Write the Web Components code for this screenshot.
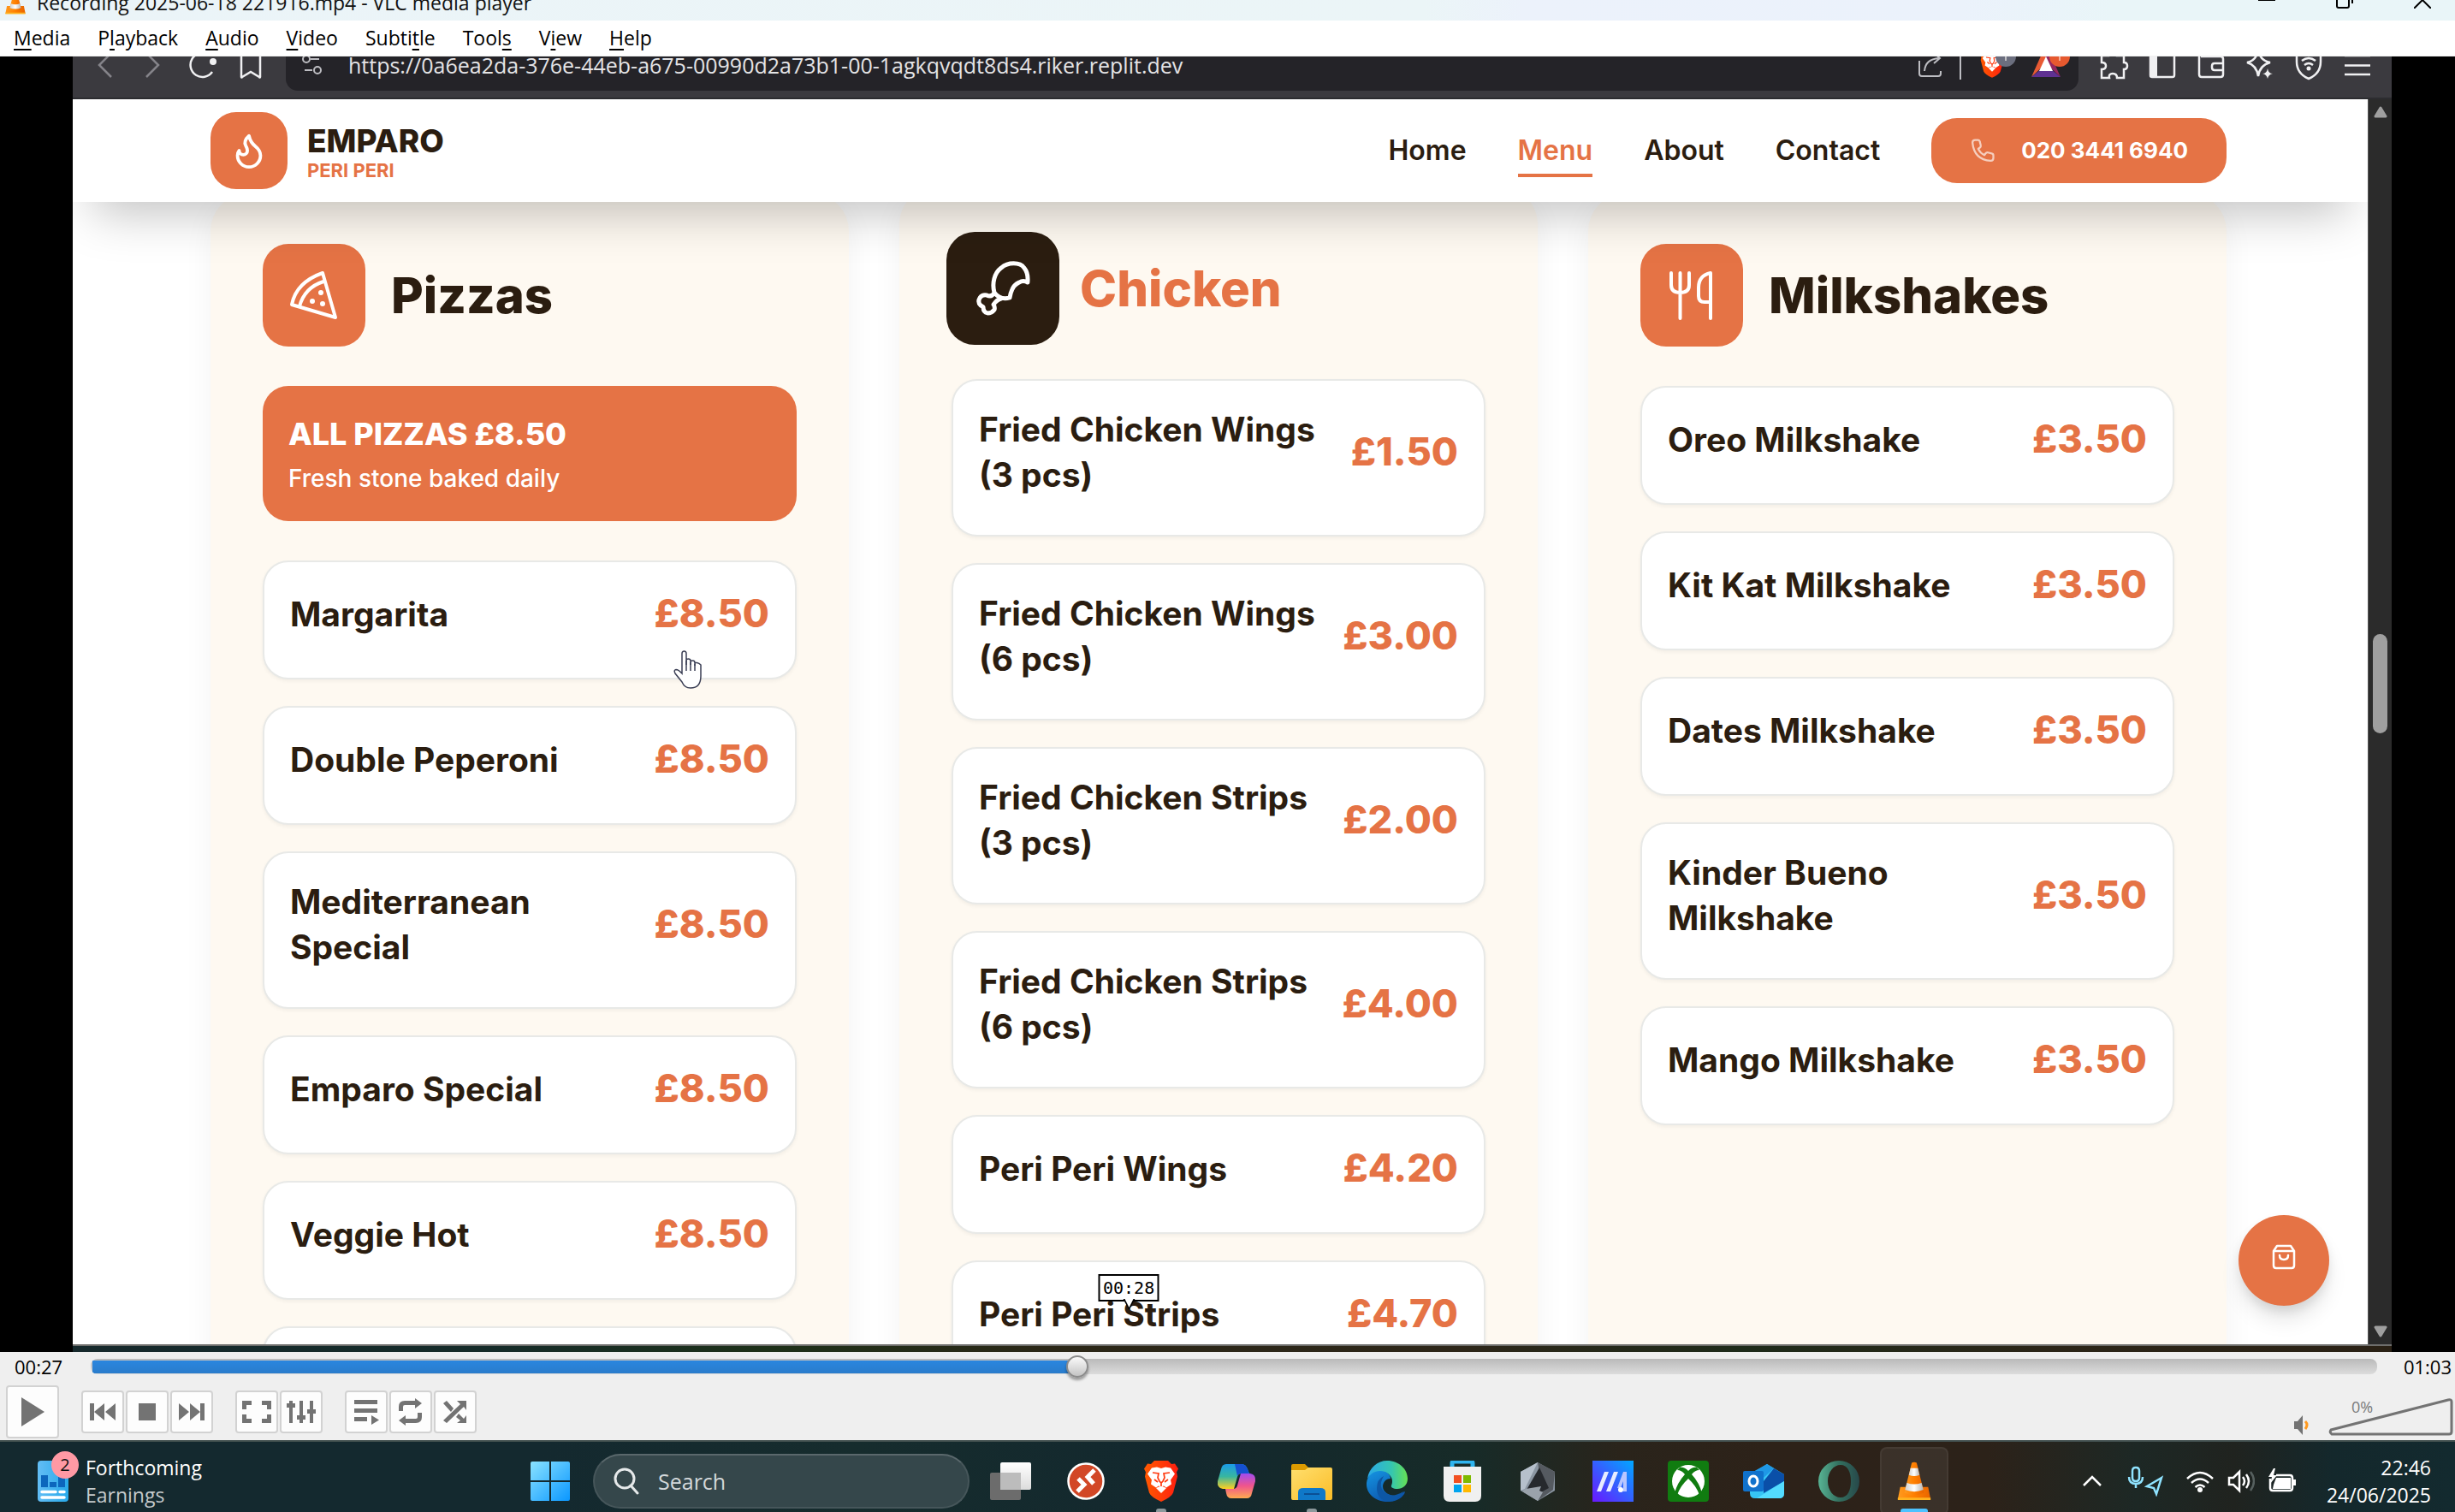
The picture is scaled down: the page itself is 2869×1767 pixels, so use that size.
<!DOCTYPE html>
<html lang="en">
<head>
<meta charset="utf-8">
<title>Recording 2025-06-18 221916.mp4 - VLC media player</title>
<style>
html,body{height:100%;margin:0}
body{background:#000;overflow:hidden;--ui:"Open Sans","Noto Sans",sans-serif;--site:Inter,"Open Sans",sans-serif;--orange:#e57345;--ink:#2b1d10;font-family:var(--ui)}
</style>
</head>
<body>
<vlc-window>
  <vlc-titlebar slot="title">Recording 2025-06-18 221916.mp4 - VLC media player</vlc-titlebar>
  <vlc-menubar slot="menu"></vlc-menubar>
  <browser-frame slot="video">
    <browser-toolbar slot="toolbar"></browser-toolbar>
    <restaurant-page>
      <site-header slot="header"></site-header>
      <menu-column icon="pizza" heading="Pizzas">
        <promo-banner slot="promo" heading="ALL PIZZAS £8.50">Fresh stone baked daily</promo-banner>
        <menu-item price="£8.50">Margarita</menu-item>
        <menu-item price="£8.50">Double Peperoni</menu-item>
        <menu-item price="£8.50">Mediterranean Special</menu-item>
        <menu-item price="£8.50">Emparo Special</menu-item>
        <menu-item price="£8.50">Veggie Hot</menu-item>
        <menu-item></menu-item>
      </menu-column>
      <menu-column icon="chicken" heading="Chicken" hovered>
        <menu-item price="£1.50">Fried Chicken Wings (3 pcs)</menu-item>
        <menu-item price="£3.00">Fried Chicken Wings (6 pcs)</menu-item>
        <menu-item price="£2.00">Fried Chicken Strips (3 pcs)</menu-item>
        <menu-item price="£4.00">Fried Chicken Strips (6 pcs)</menu-item>
        <menu-item price="£4.20">Peri Peri Wings</menu-item>
        <menu-item price="£4.70">Peri Peri Strips</menu-item>
      </menu-column>
      <menu-column icon="cutlery" heading="Milkshakes">
        <menu-item price="£3.50">Oreo Milkshake</menu-item>
        <menu-item price="£3.50">Kit Kat Milkshake</menu-item>
        <menu-item price="£3.50">Dates Milkshake</menu-item>
        <menu-item price="£3.50">Kinder Bueno Milkshake</menu-item>
        <menu-item price="£3.50">Mango Milkshake</menu-item>
      </menu-column>
      <basket-button slot="fab"></basket-button>
      <hand-cursor slot="cursor"></hand-cursor>
    </restaurant-page>
    <scroll-track slot="scroll"></scroll-track>
  </browser-frame>
  <vlc-controls slot="controls"></vlc-controls>
  <win-taskbar slot="taskbar"></win-taskbar>
</vlc-window>

<script>
const reset = `:host,*{box-sizing:border-box}button,input{font:inherit;color:inherit;border:0;background:none;padding:0;margin:0}a{color:inherit;text-decoration:none}svg{display:block;flex:none}`;
function define(name, render) {
  customElements.define(name, class extends HTMLElement {
    constructor() { super(); this.attachShadow({mode:'open'}); }
    connectedCallback() { this.shadowRoot.innerHTML = render(this).replace('<style>', '<style>' + reset); }
  });
}

const cone = size => `<svg width="${size}" height="${size}" viewBox="0 0 48 48" aria-hidden="true">
  <defs><linearGradient id="co" x1="0" x2="1"><stop offset="0" stop-color="#ff9a1f"/><stop offset=".5" stop-color="#ff7f00"/><stop offset="1" stop-color="#e86400"/></linearGradient>
  <linearGradient id="cw" x1="0" x2="1"><stop offset="0" stop-color="#cfcfcf"/><stop offset=".5" stop-color="#fff"/><stop offset="1" stop-color="#b5b5b5"/></linearGradient></defs>
  <path d="M7 31h34l3 15H4z" fill="url(#co)"/><path d="M4 44h40v3H4z" fill="#ffb320"/>
  <path d="M21 1.500q3-1.500 6 0L36 38q-12 6-24 0z" fill="url(#co)"/>
  <path d="M19.500 8h9l2 8.500q-6.500 2.500-13 0z" fill="url(#cw)"/><path d="M15 26q9 3.500 18 0l2.200 8.500q-11 4.500-22.400 0z" fill="url(#cw)"/></svg>`;

const lion = (w,h) => `<svg width="${w}" height="${h}" viewBox="0 0 40 48" aria-hidden="true">
  <defs><linearGradient id="br" x1="0" x2="1"><stop offset="0" stop-color="#ff5a00"/><stop offset="1" stop-color="#ff1e10"/></linearGradient></defs>
  <path d="M12 0h16l4 4 4-.5 4 6-2 4 1 5-5 19q-2 5-14 10.500Q8 42.500 6 37.500L1 18.500l1-5-2-4 4-6 4 .5z" fill="url(#br)"/>
  <path d="M20 9l5-1.500 6 1 5 7-5 7 1 5-6 4-3-2-3 1-3-1-3 2-6-4 1-5-5-7 5-7 6-1z" fill="#fff"/><path d="M14 32l6-2.500 6 2.500-6 6z" fill="#fff"/>
  <path d="M10 14l7 1-1 5 2 4 2 2 2-2 2-4-1-5 7-1M12 22l4 3M28 22l-4 3M20 26v4" fill="none" stroke="#ff3a10" stroke-width="1.700"/></svg>`;

define('vlc-window', () => `<style>
:host{display:flex;flex-direction:column;height:100vh}
.v{flex:1;min-height:0;display:flex;background:#000;padding:0 74px 0 85px}
::slotted([slot=video]){flex:1}
</style><slot name="title"></slot><slot name="menu"></slot><main class="v"><slot name="video"></slot></main><slot name="controls"></slot><slot name="taskbar"></slot>`);

define('vlc-titlebar', () => `<style>
:host{display:block;height:24px;overflow:hidden;background:linear-gradient(90deg,#ebf4f8 0,#ebf5f7 58%,#ecf2fb 62%,#ebf2fb 80%,#e9f5f8 86%,#e9f5f8 100%)}
.r{height:48px;margin-top:-24px;display:flex;align-items:center;justify-content:space-between;padding:0 28px 0 4px}
.t{display:flex;align-items:center;gap:11px;padding-top:6px;font-size:23px;line-height:30px;color:#111}
.c{display:flex;gap:71px}
button{width:20px;height:20px}
</style><header class="r"><div class="t">${cone(28)}<span><slot></slot></span></div>
<div class="c"><button aria-label="Minimise"><svg width="20" height="20"><path d="M0 10h20" stroke="#000" stroke-width="2"/></svg></button>
<button aria-label="Restore"><svg width="20" height="20" fill="none" stroke="#000" stroke-width="2" overflow="visible"><rect x="1" y="5" width="14" height="14" rx="2"/><path d="M5 1h10q4 0 4 4v9"/></svg></button>
<button aria-label="Close"><svg width="20" height="20"><path d="M0 0l20 20M20 0L0 20" stroke="#000" stroke-width="2"/></svg></button></div></header>`);

define('vlc-menubar', () => `<style>
:host{display:block;background:#fff;border-bottom:1px solid #f0f0f0}
nav{height:41px;padding:0 16px;display:flex;align-items:center;gap:32px}
button{font-size:23px;line-height:30px;color:#000;padding-bottom:2px}
u{text-underline-offset:4px;text-decoration-thickness:2px;text-decoration-skip-ink:none}
</style><nav><button><u>M</u>edia</button><button>P<u>l</u>ayback</button><button><u>A</u>udio</button><button><u>V</u>ideo</button><button>Subti<u>t</u>le</button><button>Tool<u>s</u></button><button>V<u>i</u>ew</button><button><u>H</u>elp</button></nav>`);

define('browser-frame', () => `<style>
:host{display:flex;flex-direction:column;min-width:0}
.p{flex:1;min-height:0;display:flex}
::slotted(restaurant-page){flex:1;min-width:0}
.s{height:9px;border-top:2px solid #6e6e6c;background:linear-gradient(90deg,#16292c 0,#152b29 18%,#1d3018 30%,#2b2717 42%,#2d2619 60%,#1e2b1a 72%,#2b2517 85%,#2a2115 100%)}
</style><slot name="toolbar"></slot><div class="p"><slot></slot><slot name="scroll"></slot></div><div class="s"></div>`);

define('browser-toolbar', () => `<style>
:host{display:block;height:50px;overflow:hidden;background:#3b3a3f;border-bottom:2px solid #2c2c30}
.r{height:76px;margin-top:-28px;display:flex;align-items:center;padding:0 24px;gap:25px}
.n{display:flex;gap:24px}
.b{flex:1;display:flex;align-items:center;height:60px;border-radius:14px;background:#242328;padding:0 19px;color:#e4e4e6}
input{flex:1;min-width:0;margin-left:30px;font-size:25px;height:40px;outline:0}
.i{display:flex;gap:25px;align-items:center}
.e{display:flex;gap:20px;align-items:center}
svg{fill:none;stroke:#f0f0f2;stroke-width:2.500;overflow:visible}
.d{stroke:#85848a}.w{stroke:#bdbdc2;stroke-width:2}
svg svg{stroke:none}
</style><div class="r"><div class="n">
<button aria-label="Back"><svg class="d" width="32" height="32"><path d="M21 2L7 16l14 14"/></svg></button>
<button aria-label="Forward"><svg class="d" width="32" height="32"><path d="M6 2l14 14L6 30"/></svg></button>
<button aria-label="Reload"><svg width="32" height="32"><path d="M27 24A14 14 0 1 1 22 3.500"/><circle cx="28" cy="12" r="4" fill="#f0f0f2" stroke="none"/></svg></button>
<button aria-label="Bookmark"><svg width="32" height="32"><path d="M5 0v30q0 1 1 0l10-6 10 6q1 1 1 0V0z"/></svg></button></div>
<div class="b"><svg class="w" width="24" height="24"><circle cx="5" cy="5" r="4"/><path d="M10 5h10M3 18h9"/><circle cx="18" cy="18" r="4"/></svg>
<input type="text" aria-label="Address" value="https://0a6ea2da-376e-44eb-a675-00990d2a73b1-00-1agkqvqdt8ds4.riker.replit.dev">
<div class="e"><button aria-label="Share"><svg class="w" width="28" height="28"><path d="M1 9v15q0 3 3 3h19q3 0 3-3v-3M7 21Q8 7 24 6M18 0l7 6-7 6"/></svg></button>
<svg class="w" width="2" height="34"><path d="M1 0v34"/></svg>
<button aria-label="Shields"><svg width="42" height="36" viewBox="0 0 42 36"><g transform="translate(2 -2)">${lion(28,36)}</g><circle cx="32" cy="8" r="12" fill="#6b6e7e" stroke="none"/><path d="M32 0v13" stroke="#ddd" stroke-width="1.500"/></svg></button>
<button aria-label="Rewards"><svg width="36" height="32" viewBox="0 0 36 32"><path d="M17-8L0 30l17-16z" fill="#e85a34" stroke="none"/><path d="M17-8l17 38-17-16z" fill="#96275f" stroke="none"/><path d="M0 30L17 16l17 14z" fill="#5f3192" stroke="none"/><path d="M17 6l8 17H9z" fill="#fff" stroke="none"/><circle cx="33" cy="6" r="12" fill="#e6592f" stroke="none"/><path d="M33-2v13" stroke="#f7c9b8" stroke-width="1.500"/></svg></button></div></div>
<div class="i"><button aria-label="Extensions"><svg width="32" height="32"><path d="M2 5h8q0-5 5-5t5 5h8v8q4 0 4 4t-4 4v10h-8q0-5-5-5t-4 5H2V21q5 0 5-4t-5-4z"/></svg></button>
<button aria-label="Sidebar"><svg width="32" height="32"><rect x="2" y="1" width="28" height="29" rx="2"/><path d="M1 1h9v29H1z" fill="#f0f0f2" stroke="none"/></svg></button>
<button aria-label="Wallet"><svg width="32" height="32"><path d="M28 6V3q0-2-2-2H5Q2 1 2 4v23q0 3 3 3h22q3 0 3-3V9q0-3-3-3H4"/><path d="M30 14H20q-3 0-3 3v2q0 3 3 3h10"/></svg></button>
<button aria-label="Leo"><svg width="32" height="32"><path d="M14-2q2 13 14 15-12 3-14 16Q12 16 1 13 12 11 14-2z"/><path d="M25 20q1 6 6 6-5 1-6 6-1-5-6-6 5 0 6-6z" fill="#f0f0f2" stroke="none"/></svg></button>
<button aria-label="VPN"><svg width="32" height="32"><path d="M16-2Q8 2 2 2v10q0 14 14 20 14-6 14-20V2Q24 2 16-2z"/><path d="M8 11q8-6 16 0M11 16q5-4 10 0"/><circle cx="16" cy="20" r="2.500" fill="#f0f0f2" stroke="none"/></svg></button>
<button aria-label="Menu"><svg width="32" height="32" stroke-width="3"><path d="M1 5h30M1 16.500h30M1 27h30"/></svg></button></div></div>`);

define('restaurant-page', () => `<style>
:host{display:flex;flex-direction:column;position:relative;overflow:hidden;background:#fff;font-family:var(--site)}
.g{display:grid;grid-template-columns:repeat(3,1fr);gap:59px;padding:0 165px 0 161px;margin-top:-10px}
</style><slot name="header"></slot><section class="g"><slot></slot></section><slot name="fab"></slot><slot name="cursor"></slot>`);

define('site-header', () => `<style>
:host{display:block;position:relative;z-index:2;background:#fff;box-shadow:0 36px 56px -24px rgba(0,0,0,.25);flex:none}
header{height:120px;padding:0 165px 0 161px;display:flex;align-items:center;justify-content:space-between}
.b{display:flex;align-items:center;gap:23px}
.l{width:90px;height:90px;border-radius:30px;background:var(--orange);display:grid;place-items:center}
.x{padding-top:4px}
.n{font-size:37px;line-height:42px;font-weight:800;color:var(--ink)}
.s{font-size:22px;line-height:26px;font-weight:700;color:var(--orange)}
nav{display:flex;align-items:center;gap:60px;font-size:32px;font-weight:600;color:var(--ink)}
nav a{border-bottom:4px solid transparent;border-top:4px solid transparent;line-height:54px}
nav a.on{color:var(--orange);border-bottom-color:var(--orange)}
nav a.p{display:flex;align-items:center;gap:30px;height:76px;padding:0 45px;border:0;border-radius:30px;background:var(--orange);color:#fff;font-size:26px;font-weight:700}
.p svg{opacity:.65}
</style><header><a class="b" href="#"><span class="l"><svg width="46" height="46" viewBox="0 0 24 24" fill="none" stroke="#fff" stroke-width="2" stroke-linejoin="round"><path d="M8.500 14.500A2.500 2.500 0 0 0 11 12c0-1.380-.5-2-1-3-1.072-2.143-.224-4.054 2-6 .5 2.500 2 4.900 4 6.500 2 1.600 3 3.500 3 5.500a7 7 0 1 1-14 0c0-1.153.433-2.294 1-3a2.500 2.500 0 0 0 2.500 2.500z"/></svg></span><span class="x"><div class="n">EMPARO</div><div class="s">PERI PERI</div></span></a>
<nav><a href="#">Home</a><a class="on" href="#">Menu</a><a href="#">About</a><a href="#">Contact</a><a class="p" href="#"><svg width="30" height="30" viewBox="0 0 24 24" fill="none" stroke="#fff" stroke-width="1.800" stroke-linejoin="round"><path d="M2.500 4.500Q2.500 2 5 2h2.500q1.500 0 1.800 1.500l.9 3.500q.3 1.400-.8 2.200l-1.600 1.200q2 4 5.800 5.800l1.200-1.600q.8-1.100 2.200-.8l3.500.9q1.500.3 1.500 1.800V19q0 2.500-2.500 2.500Q4 20.500 2.500 4.500z"/></svg>020 3441 6940</a></nav></header>`);

const glyphs = {
  pizza:`<svg width="58" height="58" viewBox="0 0 58 58" fill="none" stroke="#fff" stroke-width="4" stroke-linejoin="round" stroke-linecap="round"><path d="M39 3L54 55 3 40Q8 14 39 3zM40 13Q18 20 12 42"/><g fill="#fff" stroke="none"><circle cx="37" cy="26" r="3"/><circle cx="27" cy="36" r="3"/><circle cx="39" cy="39" r="3"/></g></svg>`,
  chicken:`<svg width="58" height="58" viewBox="0 0 64 64" fill="none" stroke="#fff" stroke-width="5" stroke-linejoin="round" stroke-linecap="round"><path d="M22 37C19 26 22 14 30 8 38 1 52 1 57 8q5 6 4 17-5-3-10 0-6 3-8 8-2 4-3 10-11 3-18-6zM22 37q-3 6-9 3-5-1-8 3-3 5 1 9l3 2q0 6 5 7 5 0 8-4 1-3-1-6 4-6 9-7"/></svg>`,
  cutlery:`<svg width="58" height="58" viewBox="0 0 58 58" fill="none" stroke="#fff" stroke-width="4" stroke-linejoin="round" stroke-linecap="round"><path d="M5 3v14q0 9 10.500 9T26 17V3M15.500 3v53M51 3v53M51 3Q37 6 37 20v10q0 7 7 7h7"/></svg>`
};

define('menu-column', el => `<style>
:host{display:block;min-width:0;background:#fef9f1;border-radius:44px;padding:59px 61px;box-shadow:0 10px 36px rgba(0,0,0,.05)}
:host([hovered]){margin-top:-8px}
.h{display:flex;align-items:center;gap:30px;margin-bottom:46px}
.q{width:120px;height:120px;border-radius:30px;background:var(--orange);display:grid;place-items:center;flex:none}
h2{margin:0;font-size:58px;line-height:72px;font-weight:800;color:var(--ink)}
:host([hovered]) .q{background:var(--ink);transform:scale(1.1)}
:host([hovered]) h2{color:var(--orange)}
.l{display:flex;flex-direction:column;gap:31px}
</style><div class="h"><span class="q">${glyphs[el.getAttribute('icon')]}</span><h2>${el.getAttribute('heading')}</h2></div><slot name="promo"></slot><div class="l"><slot></slot></div>`);

define('promo-banner', el => `<style>
:host{display:block;margin-bottom:46px;padding:31px 30px;border-radius:30px;background:var(--orange);color:#fff}
h3{margin:0 0 7px;font-size:36px;line-height:51px;font-weight:800}
p{margin:0;font-size:28px;line-height:38px;font-weight:500}
</style><h3>${el.getAttribute('heading')}</h3><p><slot></slot></p>`);

define('menu-item', el => `<style>
:host{display:flex;align-items:center;justify-content:space-between;gap:16px;min-height:139px;padding:30px;background:#fff;border:2px solid #e8e9e7;border-radius:30px;box-shadow:0 2px 4px rgba(0,0,0,.05)}
h3{margin:0 0 14px;font-size:39px;line-height:53px;font-weight:700;color:var(--ink)}
p{margin:0 0 15px;font-size:45px;line-height:60px;font-weight:800;color:var(--orange)}
</style><h3><slot></slot></h3><p>${el.getAttribute('price') || ''}</p>`);

define('basket-button', () => `<style>
:host{position:absolute;right:45px;bottom:45px;z-index:2}
button{width:106px;height:106px;border-radius:50%;background:var(--orange);display:grid;place-items:center;padding-bottom:8px;box-shadow:0 18px 28px -6px rgba(0,0,0,.14),0 6px 12px rgba(0,0,0,.08)}
</style><button aria-label="Basket"><svg width="28" height="30" fill="none" stroke="#fff" stroke-width="2.500" stroke-linejoin="round" stroke-linecap="round"><path d="M2 8l4-6h16l4 6v17q0 3-3 3H5q-3 0-3-3zM2 8h24M9 13q0 5 5 5t5-5"/></svg></button>`);

define('hand-cursor', () => `<style>:host{position:absolute;left:702px;top:644px;z-index:3}</style>
<svg width="34" height="46" viewBox="0 0 34 46"><path d="M10 27V4q0-3 2.500-3T15 4v13-5q0-2 2.500-2t2.500 2.500V17v-3q0-2 2.500-2t2.500 2.500V18v-2q0-2 2.500-1.500T32 17v13q0 14-12 14-7 0-10-7L2 27q-2-4 1-4.500 3 0 7 4.500z" fill="#fff" stroke="#3b3f55" stroke-width="1.500"/><path d="M15 12v12M20 14v10M25 16v8" stroke="#3b3f55" stroke-width="1.500"/></svg>`);

define('scroll-track', () => `<style>
:host{display:flex;flex-direction:column;align-items:center;width:28px;padding:8px 0;background:#2b2b2b;border-left:1px solid #555}
.t{flex:1;display:flex;flex-direction:column;align-items:center}
.t::before{content:"";flex:603}.t::after{content:"";flex:693}
i{width:17px;height:116px;border-radius:9px;background:#9f9f9f}
</style><svg width="18" height="14"><path d="M9 2l6 10H3z" fill="#9f9f9f" stroke="#9f9f9f" stroke-width="3" stroke-linejoin="round"/></svg><div class="t"><i></i></div><svg width="18" height="14"><path d="M9 12l6-10H3z" fill="#9f9f9f" stroke="#9f9f9f" stroke-width="3" stroke-linejoin="round"/></svg>`);

define('vlc-controls', () => `<style>
:host{display:block;background:#efefef;height:103px;color:#000;position:relative}
.p{height:34px;display:flex;align-items:center;padding:0 4px 0 17px;font-size:22px}
time{line-height:30px}
.w{flex:1;margin:0 31px 0 33px;position:relative;display:flex;height:34px;align-items:center}
.w input{appearance:none;-webkit-appearance:none;width:100%;height:18px;border-radius:8px;background:linear-gradient(#2a86df,#2a7ccb) 2px 2px/43% 15px no-repeat,linear-gradient(#bababa,#dcdcdc)}
.w input::-webkit-slider-thumb{-webkit-appearance:none;width:26px;height:26px;border-radius:50%;border:2px solid #8b8b8b;background:linear-gradient(#fafafa,#c4c4c4);box-shadow:0 3px 3px rgba(0,0,0,.35)}
.tip{position:absolute;left:45.400%;bottom:93px;transform:translateX(-50%);height:32px;width:71px;border:2px solid #000;background:#fff;font:20px/28px "DejaVu Sans Mono",monospace;text-align:center;z-index:4}
.tip svg{position:absolute;left:27px;top:27px}
.b{height:69px;display:flex;align-items:center;padding:3px 2px 0 7px;gap:26px}
.g{display:flex;gap:2px}
.g button{width:50px;height:50px;border:2px solid #d2d2d2;border-radius:4px;background:#fdfdfd;display:grid;place-items:center}
.g button.play{width:62px;height:62px}
.g svg{fill:#737373}
.v{margin-left:auto;display:flex;align-items:flex-end;gap:22px;height:56px}
.s{position:relative;width:146px;height:46px}
.s label{position:absolute;left:27px;top:0;font-size:18px;line-height:24px;color:#7a7a7a}
.s input{position:absolute;inset:0;opacity:0;width:100%}
</style><div class="p"><time>00:27</time><div class="w"><input type="range" aria-label="Position" min="0" max="100" step="0.100" value="43.100"><output class="tip">00:28<svg width="14" height="13"><path d="M0 0h14L7 13z" fill="#000"/><path d="M2 0h10L7 10z" fill="#fff"/></svg></output></div><time>01:03</time></div>
<div class="b"><div class="g"><button class="play" aria-label="Play"><svg width="36" height="36"><path d="M5 1l27 17L5 35z"/></svg></button></div>
<div class="g"><button aria-label="Previous"><svg width="32" height="22"><path d="M1 1h5v20H1zM18 1v20L6 11zM31 1v20L19 11z"/></svg></button><button aria-label="Stop"><svg width="20" height="20"><path d="M0 0h20v20H0z"/></svg></button><button aria-label="Next"><svg width="32" height="22"><path d="M26 1h5v20h-5zM14 1v20l12-10zM1 1v20l12-10z"/></svg></button></div>
<div class="g"><button aria-label="Fullscreen"><svg width="34" height="28"><path d="M0 1h11v5H5v5H0zM34 1H23v5h6v5h5zM0 27h11v-5H5v-5H0zM34 27H23v-5h6v-5h5z"/></svg></button><button aria-label="Extended settings"><svg width="34" height="28"><path d="M3 1h4v26H3zM0 4h10v5H0zM15 1h4v26h-4zM12 18h10v5H12zM27 1h4v26h-4zM24 11h10v5H24z"/></svg></button></div>
<div class="g"><button aria-label="Playlist"><svg width="30" height="30"><path d="M1 1h27v5H1zM1 11h27v5H1zM1 21h15v5H1zM21 19v11l9-5.500z"/></svg></button><button aria-label="Loop"><svg width="30" height="32"><path d="M1 15V10Q1 3 8 3h12V0l8 6-8 6V8H8Q6 8 6 10v5zM28 17v5q0 7-7 7H9v3l-8-6 8-6v4h12q2 0 2-2v-5z"/></svg></button><button aria-label="Random"><svg width="30" height="28"><path d="M1 4l4-3 8 9-3 4zM1 24L21 5l-4-4h11v11l-3-4L5 27zM19 16l6 6 3-4v9H17l4-3-5-4z"/></svg></button></div>
<div class="v"><svg width="18" height="24"><path d="M0 7h4l6-7v23l-6-7H0z" fill="#737373"/><path d="M13 7q4 4 0 9" fill="none" stroke="#ff9a1f" stroke-width="3"/></svg>
<div class="s"><label for="vol">0%</label><svg width="146" height="46"><path d="M3 39L140 4q4-1 4 2v35q0 3-3 3H4q-3-2-1-5z" fill="none" stroke="#737373" stroke-width="3"/></svg><input id="vol" type="range" min="0" max="125" value="0"></div></div></div>`);

const apps = {
'Task View':`<svg width="48" height="48" viewBox="0 0 48 48"><defs><linearGradient id="a" y2="1" x2="0"><stop stop-color="#fff"/><stop offset="1" stop-color="#dcdcdc"/></linearGradient></defs><rect x="12" y="2" width="36" height="32" rx="2" fill="url(#a)"/><rect x="0" y="14" width="36" height="32" rx="2" fill="#6c6c6c"/><path d="M12 14h24v20H12z" fill="#bcbcbc"/></svg>`,
'Remote Desktop':`<svg width="48" height="48"><circle cx="24" cy="24" r="20.500" fill="#d24726" stroke="#fff" stroke-width="2.500"/><path d="M34 11l-8 8 7 8M15 21l7 7-8 8" fill="none" stroke="#fff" stroke-width="5"/></svg>`,
'Brave':lion(42,48),
'Copilot':`<svg width="48" height="48" viewBox="0 0 48 48"><defs><linearGradient id="c1" x2="0" y2="1"><stop stop-color="#1b9be8"/><stop offset=".5" stop-color="#37b6a0"/><stop offset="1" stop-color="#ffd020"/></linearGradient><linearGradient id="c2" x2="0" y2="1"><stop stop-color="#a04cf0"/><stop offset=".5" stop-color="#f0558c"/><stop offset="1" stop-color="#ffab50"/></linearGradient></defs><path d="M12 4h18q5 0 7 6l2 5h-9q-4 0-5 4l-4 14H8q-7-1-6-9L6 10q1-6 6-6z" fill="url(#c1)"/><path d="M22 4h8q5 0 7 6l2 5h-9q-4 0-5 3z" fill="#1550d0"/><path d="M36 44H18q-5 0-6-6l-1-5h9q4 0 5-4l4-14h11q7 1 6 9l-4 14q-1 6-6 6z" fill="url(#c2)"/></svg>`,
'File Explorer':`<svg width="48" height="48" viewBox="0 0 48 48"><defs><linearGradient id="f" x2="1" y2="1"><stop stop-color="#ffdf6e"/><stop offset="1" stop-color="#fbbd28"/></linearGradient></defs><path d="M0 6q0-2 2-2h14l4 4v8H0z" fill="#dd9b00"/><path d="M0 11h16l4-3h26q2 0 2 2v34q0 2-2 2H2q-2 0-2-2z" fill="url(#f)"/><path d="M8 46V37q0-5 6-5h20q6 0 6 5v9z" fill="#0f78c8"/><path d="M15 39h18" stroke="#0b4f94" stroke-width="2"/></svg>`,
'Edge':`<svg width="48" height="48" viewBox="0 0 48 48"><defs><linearGradient id="e1" x2="1"><stop stop-color="#2aa8e8"/><stop offset=".6" stop-color="#35c6b0"/><stop offset="1" stop-color="#66e052"/></linearGradient><linearGradient id="e2" x2=".6" y2="1"><stop stop-color="#1595e2"/><stop offset="1" stop-color="#0c54ab"/></linearGradient></defs><path d="M1 21C3 8 13 0 24 0c14 0 24 10 24 21 0 8-6 12-12 12-5 0-8-2-7-4 4-8-3-16-11-16Q7 12 1 21z" fill="url(#e1)"/><path d="M0 26C1 17 8 12 16 12c7 0 12 4 12 9-6 0-9 5-9 9 0 7 8 11 14 11 6 0 10-4 11-5 1 0 1 1 0 3-4 6-11 9-19 9C11 48-1 39 0 26z" fill="url(#e2)"/><path d="M12 32q0-10 8-14-8 14 4 21 8 4 19-3-6 12-17 12-14-2-14-16z" fill="#0d57a5"/></svg>`,
'Microsoft Store':`<svg width="48" height="48" viewBox="0 0 48 48"><path d="M12 11V3q0-2 2-2h20q2 0 2 2v8" fill="none" stroke="#2fb4ee" stroke-width="5"/><path d="M2 7h44v34q0 7-7 7H9q-7 0-7-7z" fill="#f0f0f0"/><path d="M14 17h9v9h-9z" fill="#f25022"/><path d="M25 17h9v9h-9z" fill="#7fba00"/><path d="M14 28h9v9h-9z" fill="#00a4ef"/><path d="M25 28h9v9h-9z" fill="#ffb900"/></svg>`,
'Armoury Crate':`<svg width="48" height="48" viewBox="0 0 48 48"><path d="M24 2l20 11v22L24 47 4 35V13z" fill="#8b96a2"/><path d="M24 2l20 11-2 21-18 13 6-12z" fill="#555a60"/><path d="M26 8l11 24-13 7-13-5z" fill="#26292d"/><path d="M24 2L9 33l-5 2V13z" fill="#b6c0cb"/><path d="M10 33l18-3-2 5 4 2-6 10L6 36z" fill="#9aa2ab"/></svg>`,
'MyASUS':`<svg width="48" height="48" viewBox="0 0 48 48"><defs><linearGradient id="m" x1="0" y1="1" x2="1" y2="0"><stop stop-color="#6a17ff"/><stop offset="1" stop-color="#00a8ff"/></linearGradient></defs><path d="M0 0h48v48H0z" fill="url(#m)"/><path d="M5 36l9-23h5l-9 23zM16 36l9-23h5l-9 23z" fill="#e7ecff"/><path d="M36 13h4v23h-4V24l-3 8h-4z" fill="#b9c6ff"/><circle cx="33" cy="34" r="3" fill="#fff"/></svg>`,
'Xbox':`<svg width="48" height="48" viewBox="0 0 48 48"><rect width="48" height="48" rx="4" fill="#107c10"/><circle cx="24" cy="24" r="19" fill="#fff"/><path d="M14 8q5-1 10 4 5-5 10-4l3 3q-5 0-9 5 9 10 12 22l-3 2Q33 29 24 21 15 29 11 40l-3-2q3-12 12-22-4-5-9-5z" fill="#107c10"/></svg>`,
'Outlook':`<svg width="48" height="48" viewBox="0 0 48 48"><path d="M8 16L28 4l20 12v22q0 6-6 6H14q-6 0-6-6z" fill="#36c5f5"/><path d="M10 14L28 4l8 5-22 20z" fill="#1f98e6"/><path d="M36 9l12 7v8L24 38V24z" fill="#0a4fa8"/><path d="M48 24v14q0 6-6 6H16z" fill="#53dcff"/><rect y="12" width="24" height="24" rx="2" fill="#1072cc"/><ellipse cx="12" cy="24" rx="5" ry="6" fill="none" stroke="#fff" stroke-width="3"/></svg>`,
'Opera':`<svg width="48" height="48" viewBox="0 0 48 48"><defs><linearGradient id="o" x2="1"><stop stop-color="#58b494"/><stop offset=".5" stop-color="#33705f"/><stop offset="1" stop-color="#27484a"/></linearGradient></defs><path fill-rule="evenodd" d="M24 0a24 24 0 1 1 0 48 24 24 0 0 1 0-48zm2 5c-8 0-15 8-15 19s7 19 15 19 12-8 12-19S34 5 26 5z" fill="url(#o)"/></svg>`,
'VLC media player':cone(46)};

define('task-app', el => `<style>
:host{display:flex;width:88px;justify-content:center}
button{position:relative;width:80px;height:80px;border-radius:8px;display:grid;place-items:center}
:host([active]) button{background:rgba(255,255,255,.07);box-shadow:inset 0 0 0 2px rgba(255,255,255,.05)}
i{position:absolute;bottom:2px;left:34px;width:12px;height:6px;border-radius:3px;background:#8c989b}
:host([active]) i{left:24px;width:32px;background:#4cc2ff}
</style><button aria-label="${el.getAttribute('label')}">${apps[el.getAttribute('label')]}${el.hasAttribute('running')||el.hasAttribute('active')?'<i></i>':''}</button>`);

define('win-taskbar', () => `<style>
:host{display:block;height:84px;overflow:hidden;border-top:2px solid #42504f;color:#fff;background:linear-gradient(90deg,#14292f 0,#14292f 22%,#162c2d 35%,#13282e 48%,#172b28 60%,#2a241b 66%,#2d2219 72%,#2c2219 81%,#1d2825 87%,#20231f 91%,#14282c 95%,#132a2f 100%)}
.r{height:92px;display:grid;grid-template-columns:620fr auto 588fr;align-items:center}
.wd{display:flex;align-items:center;gap:18px;padding-left:42px;text-align:left;font-size:23px;line-height:32px}
.wd .ic{position:relative}
.wd b{position:absolute;left:18px;top:-10px;width:32px;height:32px;border-radius:50%;background:#ff99a4;color:#111;font-weight:400;font-size:20px;line-height:32px;text-align:center}
.wd span span{color:#c5cbcd}
.c{display:flex;align-items:center}
.q{width:440px;height:64px;margin:0 4px 0 27px;border-radius:32px;background:#35474b;border:2px solid #46565a;border-top-color:#5a686c;display:flex;align-items:center;gap:22px;padding:0 22px}
.q input{flex:1;min-width:0;font-size:25px;outline:0;height:40px}
.q input::placeholder{color:#d3d8da;opacity:1}
.t{display:flex;align-items:center;justify-content:flex-end;gap:16px;padding-right:28px}
.t svg{fill:none;stroke:#fff;stroke-width:2.500}
.t .up{margin-right:12px}.t .mic{margin-right:10px;stroke:#8fe3ff}
.k{margin-left:18px;text-align:right;font-size:23px;line-height:32px}
</style><div class="r"><button class="wd"><span class="ic"><svg width="40" height="50"><defs><linearGradient id="w" x2="1"><stop stop-color="#62bdf5"/><stop offset="1" stop-color="#27a9ea"/></linearGradient></defs><rect x="2" y="1" width="36" height="48" rx="4" fill="url(#w)"/><path d="M6 18h8v14H6zM16 26h8v6h-8zM26 20h8v12h-8z" fill="#0c66bd"/><path d="M7 37.500h16M28 37.500h5M7 44h26" stroke="#fff" stroke-width="3.500" stroke-linecap="round"/></svg><b>2</b></span><span>Forthcoming<br><span>Earnings</span></span></button>
<div class="c"><button aria-label="Start"><svg width="46" height="46"><defs><linearGradient id="s" x2="1" y2="1"><stop stop-color="#8ae2ff"/><stop offset="1" stop-color="#0a97ff"/></linearGradient></defs><path d="M2 0h20v22H0V2q0-2 2-2zM24 0h20q2 0 2 2v20H24zM0 24h22v22H2q-2 0-2-2zM24 24h22v20q0 2-2 2H24z" fill="url(#s)"/></svg></button>
<label class="q"><svg width="30" height="32" fill="none" stroke="#e6e9ea" stroke-width="3"><circle cx="13" cy="13" r="11"/><path d="M20 21l8 9" stroke-linecap="round"/></svg><input type="search" placeholder="Search" aria-label="Search"></label>
<task-app label="Task View"></task-app><task-app label="Remote Desktop"></task-app><task-app label="Brave" running></task-app><task-app label="Copilot"></task-app><task-app label="File Explorer" running></task-app><task-app label="Edge"></task-app><task-app label="Microsoft Store"></task-app><task-app label="Armoury Crate"></task-app><task-app label="MyASUS"></task-app><task-app label="Xbox"></task-app><task-app label="Outlook"></task-app><task-app label="Opera"></task-app><task-app label="VLC media player" active></task-app></div>
<div class="t"><svg class="up" width="24" height="14"><path d="M2 12L12 2l10 10"/></svg>
<svg class="mic" width="44" height="36"><path d="M7 6q0-4 4-4t4 4v8q0 4-4 4t-4-4zM3 13q0 8 8 8t8-8M11 21v5M41 14L24 24l8 2 3 7z"/></svg>
<svg width="32" height="28"><path d="M1 11q15-14 30 0M6 16q10-9 20 0M10.500 21q5.500-5 11 0"/><circle cx="16" cy="24" r="3" fill="#fff" stroke="none"/></svg>
<svg width="32" height="28"><path d="M2 10h5l7-7v22l-7-7H2zM18 9q4 5 0 10M22 6q6 8 0 16"/><path d="M27 3q8 11 0 22" stroke="#56605f"/></svg>
<svg width="34" height="30"><path d="M9 8h16q3 0 3 3v12q0 3-3 3H5q-3 0-3-3V12"/><path d="M9 11h17v13H5l1-5zM28 13h4v7h-4zM6 0L0 10h4l-2 8L10 8H6l2-8z" fill="#fff" stroke="none"/></svg>
<div class="k">22:46<br>24/06/2025</div></div></div>`);
</script>
</body>
</html>
